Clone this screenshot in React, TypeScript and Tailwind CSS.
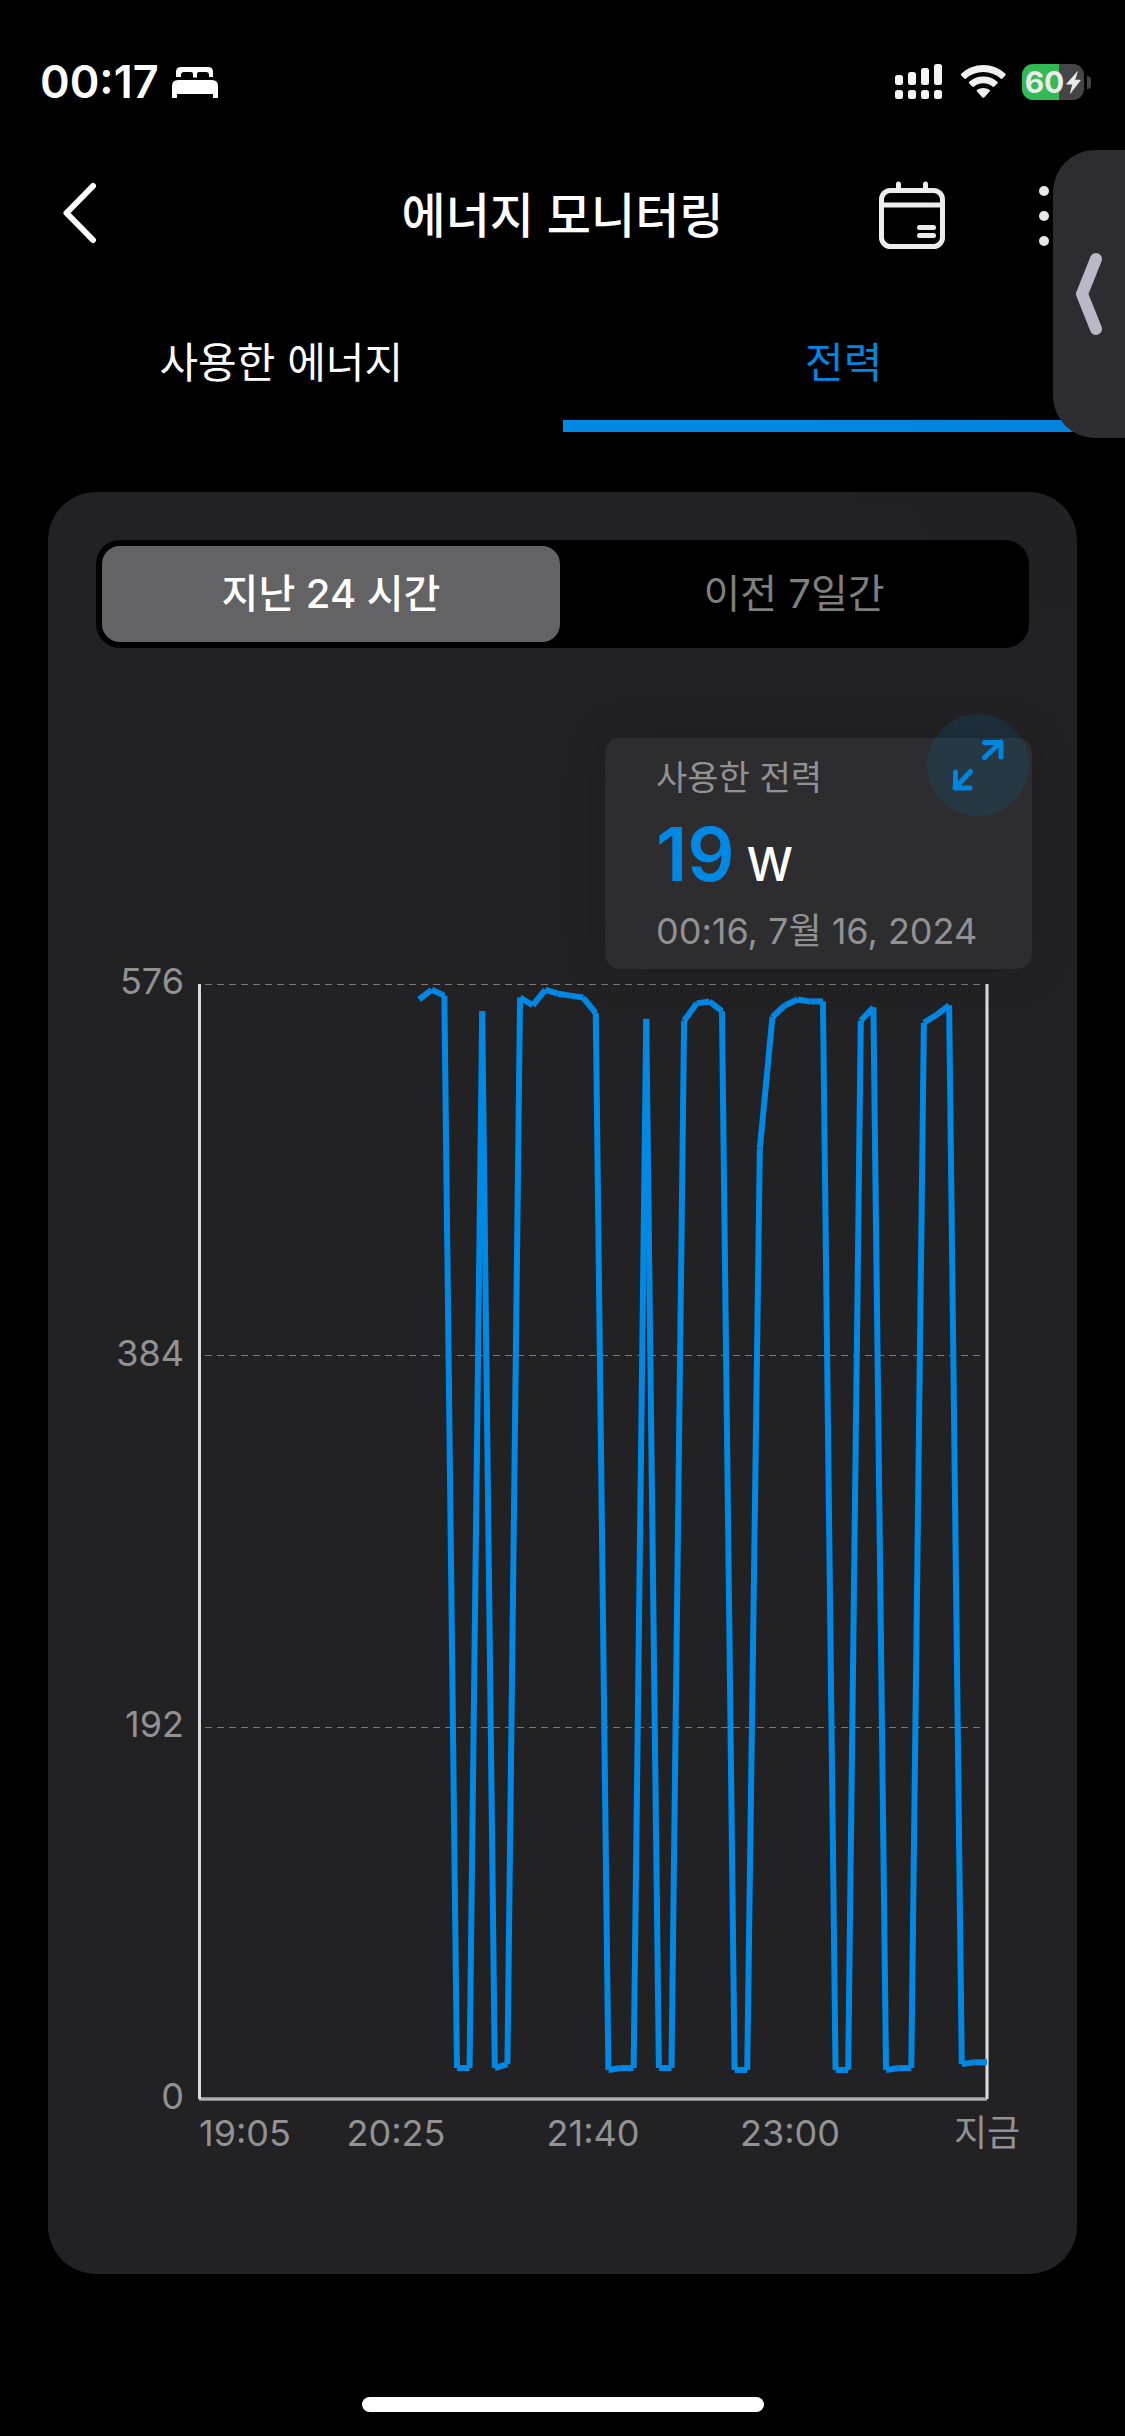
import { useState } from 'react';

const POWER = [
  568, 573, 570, 16, 16, 562, 16, 18, 569, 565, 573, 571, 570, 569, 561, 15, 16, 16, 558, 16, 16, 557, 566,
  567, 562, 15, 15, 491, 559, 565, 568, 567, 567, 15, 15, 557, 564, 15, 16, 16, 556, 560, 565, 18, 19, 19,
];
const MAX_POWER = 576;
const WIDTH = 788;
const HEIGHT = 1115;
const STEP = 12.62;
const Y_LABELS = ['576', '384', '192', '0'];
const X_LABELS = ['19:05', '20:25', '21:40', '23:00', '지금'];

function StatusBar() {
  return (
    <div className="flex h-[132px] items-center justify-between pt-[32px] pr-[34px] pl-[40px]">
      <div className="flex items-center gap-[13px]">
        <span className="text-[45px] leading-[48px] font-semibold">00:17</span>
        <svg width="46" height="31" viewBox="0 0 46 31" fill="currentColor" aria-label="수면">
          <path d="M4 10V5q0-5 5-5h27q5 0 5 5v5h-4V8q0-3-3-3h-7q-2 0-2 2v3.500h-4V7q0-2-2-2h-7q-3 0-3 3v2z" />
          <path d="M0 31V19q0-6 6-6h34q6 0 6 6v12h-5v-4H5v4z" />
        </svg>
      </div>
      <div className="flex items-center">
        <svg width="48" height="36" viewBox="0 0 48 36" fill="#f5f5f5" aria-label="신호">
          <rect x="0" y="11" width="8" height="10" rx="2.500" />
          <rect x="13" y="8" width="8" height="13" rx="2.500" />
          <rect x="26" y="4" width="8" height="17" rx="2.500" />
          <rect x="39" y="0" width="8" height="21" rx="2.500" />
          <rect x="0" y="26" width="8" height="9" rx="2.500" />
          <rect x="13" y="26" width="8" height="9" rx="2.500" />
          <rect x="26" y="26" width="8" height="9" rx="2.500" />
          <rect x="39" y="26" width="8" height="9" rx="2.500" />
        </svg>
        <svg className="ml-[17px]" width="47" height="36" viewBox="0 0 47 36" fill="#f3f3f3" aria-label="Wi-Fi">
          <path d="M1.200 11.500Q.3 10.600 1.200 9.700Q10.500 1 23.300 1t22.100 8.700q.9.900 0 1.800l-3 3q-.9.900-1.900 0Q33.300 8 23.300 8T6.100 14.500q-1 .9-1.900 0z" />
          <path d="M9.200 19.500q-.9-.9 0-1.800Q15.100 12.500 23.300 12.500t14.100 5.200q.9.900 0 1.800l-3.100 3q-.9.900-1.900 0Q28.400 19.200 23.300 19.200T14.200 22.500q-1 .9-1.900 0z" />
          <path d="M17 27.500q-.9-.9.100-1.700Q19.600 24 23.300 24t6.200 1.800q1 .8.100 1.700l-5.400 5.900q-.9.900-1.800 0z" />
        </svg>
        <div className="ml-[15px] flex items-center gap-[3px]">
          <div className="flex h-[36px] w-[62px] items-center justify-center gap-[2px] rounded-[11px] bg-[linear-gradient(to_right,#33bd56_60%,#474747_60%)]">
            <span className="text-[30px] leading-[36px] font-bold text-[#efefef]">60</span>
            <svg width="15" height="23" viewBox="0 0 15 23" fill="#efefef" aria-label="충전 중">
              <path d="M11.500.3Q12 0 11.800.8L9.200 8.800H14q1 0 .4.900L4.500 22.600q-.8.700-.6-.2L6.300 13.500H.9q-1.100-.1-.3-1z" />
            </svg>
          </div>
          <div className="h-[13px] w-[4px] rounded-r-full bg-[#474747]" />
        </div>
      </div>
    </div>
  );
}

function Header() {
  return (
    <header className="grid h-[168px] grid-cols-[1fr_auto_1fr] items-center px-[62px]">
      <button type="button" aria-label="뒤로" className="w-fit pb-[6px]">
        <svg width="36" height="62" viewBox="0 0 36 62" fill="none" stroke="currentColor" strokeWidth="6" strokeLinecap="round" strokeLinejoin="round">
          <path d="M31 4L4.500 31L31 58" />
        </svg>
      </button>
      <h1 className="text-[48px] leading-[60px] font-medium">에너지 모니터링</h1>
      <div className="flex items-center justify-end gap-[80px]">
        <button type="button" aria-label="날짜 선택">
          <svg width="66" height="70" viewBox="0 0 66 70" fill="none" stroke="#f0f0f0" strokeWidth="5" strokeLinecap="round">
            <rect x="2.500" y="9.500" width="61" height="56" rx="9" />
            <path d="M3 24H63M19.500 3v6M46.500 3v6M40.500 46.500h14M40.500 54.500h14" />
          </svg>
        </button>
        <button type="button" aria-label="더보기">
          <svg width="38" height="60" viewBox="0 0 38 60" fill="#f0f0f0">
            <circle cx="19" cy="5" r="5" />
            <circle cx="19" cy="30" r="5" />
            <circle cx="19" cy="55" r="5" />
          </svg>
        </button>
      </div>
    </header>
  );
}

function Tabs({ active, onSelect }: { active: number; onSelect: (i: number) => void }) {
  return (
    <div role="tablist" className="grid grid-cols-2">
      {['사용한 에너지', '전력'].map((label, i) => (
        <button
          key={label}
          type="button"
          role="tab"
          aria-selected={active === i}
          onClick={() => onSelect(i)}
          className={
            active === i
              ? 'h-[132px] border-b-[12px] border-[#0088e5] pt-[6px] text-[42px] leading-[60px] text-[#0088e5]'
              : 'h-[132px] border-b-[12px] border-transparent pt-[6px] text-[42px] leading-[60px] text-white'
          }
        >
          {label}
        </button>
      ))}
    </div>
  );
}

function RangeSwitch({ active, onSelect }: { active: number; onSelect: (i: number) => void }) {
  return (
    <div role="group" aria-label="기간" className="grid grid-cols-2 gap-[5px] rounded-[24px] bg-black p-[6px]">
      {['지난 24 시간', '이전 7일간'].map((label, i) => (
        <button
          key={label}
          type="button"
          aria-pressed={active === i}
          onClick={() => onSelect(i)}
          className={
            active === i
              ? 'h-[96px] rounded-[18px] bg-[#636365] text-[40px] leading-[48px] font-medium text-white'
              : 'h-[96px] rounded-[18px] text-[40px] leading-[48px] text-[#7f7f7f]'
          }
        >
          {label}
        </button>
      ))}
    </div>
  );
}

function Reading() {
  return (
    <div className="relative mt-[90px] -mr-[3px] ml-auto w-[427px] rounded-[15px] bg-[#2d2d2f] pt-[16px] pb-[14px] pl-[51px] text-[#929294] shadow-[0_0_48px_rgba(0,0,0,0.15)]">
      <p className="text-[34px] leading-[48px]">사용한 전력</p>
      <p className="flex h-[105px] items-baseline gap-[12px] leading-[105px]">
        <span className="text-[74px] font-semibold text-[#0088e5]">19</span>
        <span className="text-[46px] font-medium text-white">W</span>
      </p>
      <p className="text-[36px] leading-[48px]">00:16, 7월 16, 2024</p>
      <button
        type="button"
        aria-label="전체 화면"
        className="absolute -top-[24px] right-[3px] flex size-[102px] items-center justify-center rounded-full bg-[#0088e5]/12"
      >
        <svg width="52" height="52" viewBox="0 0 52 52" fill="none" stroke="#0085df" strokeWidth="5" strokeLinecap="round" strokeLinejoin="round">
          <path d="M32.500 18.500L49 3M32.500 3.500H49V18M18.500 32.500L3 49M3.500 33V49H18" />
        </svg>
      </button>
    </div>
  );
}

function PowerChart() {
  const points = POWER.map((value, i) => ({
    x: WIDTH - (POWER.length - 1 - i) * STEP,
    y: HEIGHT - (value / MAX_POWER) * HEIGHT,
  }));
  return (
    <div className="mt-[15px] flex gap-[15px] pr-[42px] text-[36px] text-[#929294]">
      <div className="flex w-[88px] flex-col pb-[58px]">
        <div className="flex flex-1 flex-col items-end justify-between">
          {Y_LABELS.map((label) => (
            <span key={label} className="-mt-[3px] mb-[3px] flex h-0 items-center">
              {label}
            </span>
          ))}
        </div>
      </div>
      <div className="flex-1">
        <svg className="block h-auto w-full overflow-visible" viewBox="0 0 788 1115" fill="none" role="img" aria-label="전력 그래프">
          {[0, 371, 743].map((y) => (
            <path key={y} d={`M6 ${y + 0.5}H782`} stroke="#78787a" strokeDasharray="7 5" />
          ))}
          <path d="M0 1115H788" stroke="#858587" strokeWidth="4" />
          <path d="M0 1115H788" stroke="#dcdcdc" />
          <path d="M788 0V1115" stroke="#858587" strokeWidth="4" />
          <path d="M788 0V1115" stroke="#dcdcdc" strokeWidth="2" />
          <path d="M0.500 0V1115" stroke="#dcdcdc" strokeWidth="3" />
          {points.slice(1).map((point, i) => (
            <line key={i} x1={points[i].x} y1={points[i].y} x2={point.x} y2={point.y} stroke="#0088e5" strokeWidth="6" />
          ))}
        </svg>
        <div className="mt-[10px] flex h-[48px] justify-between leading-[48px] whitespace-nowrap">
          {X_LABELS.map((label, i) => (
            <span key={label} className={i === 0 ? 'flex w-0 justify-start' : 'flex w-0 justify-center'}>
              {label}
            </span>
          ))}
        </div>
      </div>
    </div>
  );
}

export default function App() {
  const [tab, setTab] = useState(1);
  const [range, setRange] = useState(0);
  return (
    <div className="relative flex min-h-screen flex-col overflow-hidden bg-black font-['Inter','Noto_Sans_CJK_KR',sans-serif] text-white">
      <StatusBar />
      <Header />
      <Tabs active={tab} onSelect={setTab} />
      <main className="mx-[48px] mt-[60px] rounded-[48px] bg-[#222224] px-[48px] pt-[48px] pb-[117px]">
        <RangeSwitch active={range} onSelect={setRange} />
        <Reading />
        <PowerChart />
      </main>
      <div className="mx-auto mt-auto mb-[24px] h-[15px] w-[402px] rounded-full bg-white" />
      <button
        type="button"
        aria-label="사이드 패널 열기"
        className="absolute top-[150px] right-0 flex h-[288px] w-[72px] items-center justify-center rounded-l-[42px] bg-[#2d2c31] shadow-[0_0_240px_rgba(0,0,0,0.25)]"
      >
        <svg width="28" height="82" viewBox="0 0 28 82" fill="none" stroke="#bab8c7" strokeWidth="12" strokeLinecap="round" strokeLinejoin="round">
          <path d="M21 6L7 41L21 76" />
        </svg>
      </button>
    </div>
  );
}
